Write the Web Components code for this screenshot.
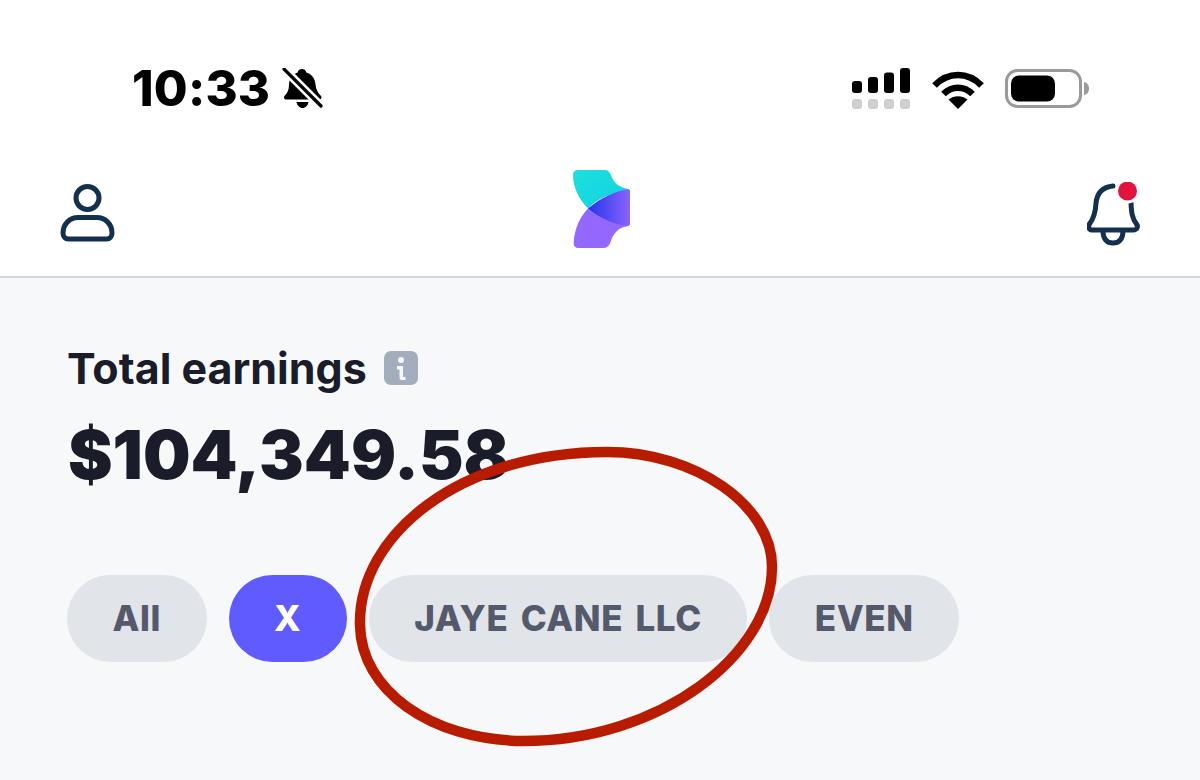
<!DOCTYPE html>
<html lang="en">
<head>
<meta charset="utf-8">
<title>Total earnings</title>
<style>
html, body { margin: 0; padding: 0; background: #f7f8fa; }
body { font-family: Inter, "Liberation Sans", sans-serif; width: 1200px; height: 780px; overflow: hidden; position: relative; }
</style>
</head>
<body>
<status-bar></status-bar>
<app-nav></app-nav>
<earnings-summary label="Total earnings" amount="$104,349.58">
    <filter-pill>All</filter-pill>
    <filter-pill active>X</filter-pill>
    <filter-pill>JAYE CANE LLC</filter-pill>
    <filter-pill>EVEN</filter-pill>
</earnings-summary>
<markup-oval></markup-oval>

<script>
class BaseElement extends HTMLElement {
    constructor() {
        super();
        this.attachShadow({ mode: "open" });
    }
    connectedCallback() {
        this.shadowRoot.innerHTML = this.render();
    }
}

customElements.define("status-bar", class extends BaseElement {
    render() {
        return `
        <style>
            :host { display: flex; align-items: center; justify-content: space-between; box-sizing: border-box; height: 155px; padding: 60px 110px 37px 132px; background: #fff; color: #000; }
            .left, .right { display: flex; align-items: center; }
            .left { gap: 12px; }
            .time { font: 800 49px/58px Inter, "Liberation Sans", sans-serif; letter-spacing: 0.2px; }
            .right { gap: 20px; }
            svg { display: block; }
            .wifi { margin-right: 1px; }
        </style>
        <div class="left">
            <span class="time">10:33</span>
            <svg width="41" height="42" viewBox="0 0 41 42">
                <path d="M20 1c2.500 0 4 1.600 4.300 3.500 6 1.800 8.700 6.500 9.200 12 .4 5 2.200 8 5.500 11.500 1 1.300.4 3.500-1.800 3.500H4.500c-2.500 0-3.200-2.300-1.800-3.800C5.500 25 7 21.500 7 17c.2-6 3.500-11 8.700-12.500C16 2.500 17.500 1 20 1z" fill="#000"/>
                <path d="M14.500 34h12c-.6 3.600-3 6-6 6s-5.400-2.400-6-6z" fill="#000"/>
                <path d="M0 -1 41 40" stroke="#fff" stroke-width="8.500" fill="none"/>
                <path d="M2 1 39 38" stroke="#000" stroke-width="3.200" stroke-linecap="round" fill="none"/>
            </svg>
        </div>
        <div class="right">
            <svg width="61" height="42" viewBox="0 0 61 42">
                <g fill="#000">
                    <rect x="1" y="13" width="10" height="12" rx="3"/>
                    <rect x="17" y="9" width="10" height="16" rx="3"/>
                    <rect x="33" y="4.500" width="10" height="20.500" rx="3"/>
                    <rect x="49" y="0" width="10" height="25" rx="3"/>
                </g>
                <g fill="#cfcfcf">
                    <rect x="1" y="31" width="10" height="10" rx="3"/>
                    <rect x="17" y="31" width="10" height="10" rx="3"/>
                    <rect x="33" y="31" width="10" height="10" rx="3"/>
                    <rect x="49" y="31" width="10" height="10" rx="3"/>
                </g>
            </svg>
            <svg class="wifi" width="52" height="39" viewBox="0 0 52 39">
                <g fill="none" stroke="#000" stroke-width="6.500">
                    <path d="M2.500 15.500C16 1.500 36 1.500 49.500 15.500"/>
                    <path d="M11.500 24C20 15.500 32 15.500 40.500 24"/>
                </g>
                <path d="M26 39 16.500 29.500C22 25 30 25 35.500 29.500z" fill="#000"/>
            </svg>
            <svg width="85" height="40" viewBox="0 0 85 40">
                <rect x="1.500" y="1.500" width="74" height="36" rx="11" fill="none" stroke="#9a9a9a" stroke-width="3"/>
                <rect x="6" y="6.500" width="44" height="26" rx="8" fill="#000"/>
                <path d="M79 13c3 .5 5 3 5 6.500S82 25.500 79 26z" fill="#9a9a9a"/>
            </svg>
        </div>`;
    }
});

customElements.define("app-nav", class extends BaseElement {
    render() {
        return `
        <style>
            :host { display: flex; align-items: center; justify-content: space-between; box-sizing: border-box; height: 123px; padding: 0 58px 12px 60px; background: #fff; border-bottom: 2px solid #d4d5d7; }
            svg { display: block; }
            .person { margin-top: 6px; }
            .logo { margin-bottom: 2px; }
            .bell { margin-top: 9px; margin-right: -1px; }
        </style>
        <svg class="person" width="55" height="58" viewBox="0 0 55 58">
            <g fill="none" stroke="#14304f" stroke-width="5">
                <circle cx="27.500" cy="14" r="11.500"/>
                <path d="M18 33.500H37C45 33.500 52 40 52 49C52 52.500 50 55 46.500 55H8.500C5 55 3 52.500 3 49C3 40 10 33.500 18 33.500Z"/>
            </g>
        </svg>
        <svg class="logo" width="57" height="78" viewBox="70 45 170 233">
            <defs>
                <linearGradient id="overlap" x1="0" y1="0" x2="1" y2="0">
                    <stop offset="0" stop-color="#2436e8"/>
                    <stop offset="1" stop-color="#8a63ff"/>
                </linearGradient>
                <linearGradient id="teal" x1="0" y1="0" x2="1" y2="1">
                    <stop offset="0" stop-color="#1de0da"/>
                    <stop offset="1" stop-color="#12cfe6"/>
                </linearGradient>
            </defs>
            <path d="M85 45H165Q178 45 184 62C192 85 210 97 232 101Q240 103 240 110C190 110 140 130 115 160C85 130 70 95 70 60Q70 45 85 45Z" fill="url(#teal)"/>
            <path d="M115 160C150 130 195 108 232 103Q240 102 240 110V205Q240 212 232 213C205 217 190 235 182 260Q176 278 160 278H88Q70 278 72 260C75 220 90 185 115 160Z" fill="#9468ff"/>
            <path d="M115 160C150 130 195 108 232 103Q240 102 240 110V205Q240 212 232 212C195 208 150 190 115 160Z" fill="url(#overlap)"/>
        </svg>
        <svg class="bell" width="56" height="64" viewBox="0 0 56 64">
            <g fill="none" stroke="#14304f" stroke-width="5" stroke-linecap="round" stroke-linejoin="round">
                <path d="M26 4C15 5 10 12 9 21C8.500 31 7 36 2.500 42C0.500 45 2 48 6 48H46C50 48 51.500 45 49.500 42C45 36 44.500 31 44 21C44 19 44 18 43.500 16"/>
                <path d="M16 49C16 57 20 61 26 61C32 61 36 57 36 49"/>
            </g>
            <circle cx="40.500" cy="9" r="12.500" fill="#fff"/>
            <circle cx="40.500" cy="9" r="9.500" fill="#e0143c"/>
        </svg>`;
    }
});

customElements.define("earnings-summary", class extends BaseElement {
    render() {
        return `
        <style>
            :host { display: block; padding: 66px 0 0 67px; color: #1a1c29; }
            .label { display: flex; align-items: center; gap: 17px; height: 48px; font-size: 43px; font-weight: 700; line-height: 48px; }
            .info { display: block; }
            .amount { margin: 23px 0 0 1px; font-size: 67px; font-weight: 900; line-height: 80px; white-space: nowrap; }
            .filters { display: flex; gap: 22px; margin-top: 80px; }
        </style>
        <div class="label">
            <span>${this.getAttribute("label")}</span>
            <svg class="info" width="34" height="34" viewBox="0 0 34 34">
                <rect width="34" height="34" rx="7" fill="#a3adbd"/>
                <circle cx="17" cy="9" r="3" fill="#f7f8fa"/>
                <path d="M13 15H19V26H15.500V18.500H13Z" fill="#f7f8fa"/>
                <path d="M15.500 26H21.500V29H17.500C16 29 15.500 27.500 15.500 26Z" fill="#f7f8fa"/>
            </svg>
        </div>
        <div class="amount">${this.getAttribute("amount")}</div>
        <div class="filters"><slot></slot></div>`;
    }
});

customElements.define("filter-pill", class extends BaseElement {
    render() {
        return `
        <style>
            :host { display: block; box-sizing: border-box; height: 87px; padding: 0 45.500px; border-radius: 43.500px; background: #e1e4e8; color: #545a6b; font-size: 35px; font-weight: 800; line-height: 87px; letter-spacing: 0.6px; word-spacing: 4px; white-space: nowrap; }
            :host([active]) { background: #5f5bff; color: #fff; }
        </style>
        <slot></slot>`;
    }
});

customElements.define("markup-oval", class extends BaseElement {
    render() {
        return `
        <style>
            :host { display: block; position: absolute; left: 0; top: 0; width: 1200px; height: 780px; pointer-events: none; }
            svg { display: block; }
        </style>
        <svg width="1200" height="780" viewBox="0 0 1200 780">
            <path d="M607 452C695 452 772 505 772 567C772 655 660 741 523 741C430 740 361 690 360 625C358 535 460 452 607 452Z" fill="none" stroke="#b81c00" stroke-width="10.500"/>
        </svg>`;
    }
});
</script>
</body>
</html>
